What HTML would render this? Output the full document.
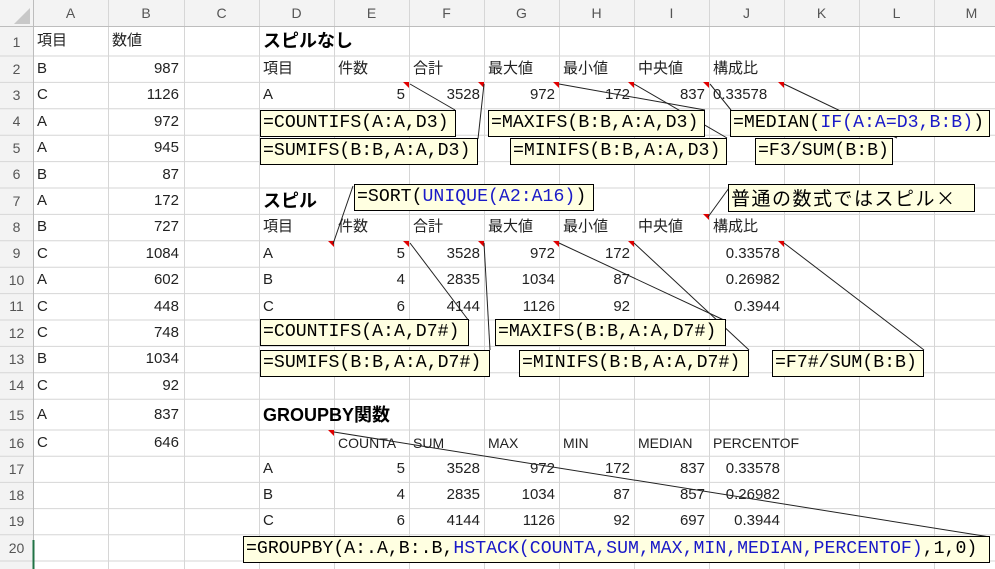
<!DOCTYPE html>
<html><head><meta charset="utf-8"><style>
*{margin:0;padding:0;box-sizing:border-box}
body{width:995px;height:569px;overflow:hidden;background:#fff;position:relative;font-family:"Liberation Sans","Noto Sans CJK JP",sans-serif;font-size:15px;color:#222}
.c{position:absolute;height:26px;line-height:26px;width:75px;padding:0 4px;white-space:nowrap}
.n{text-align:right}
.h{position:absolute;color:#555;font-size:14px;text-align:center}
.b{font-weight:bold;font-size:18px;color:#000}
.box{position:absolute;background:#ffffe1;border:1px solid #000;font-family:"Liberation Mono",monospace;font-size:18.2px;line-height:25px;padding:0 2px;white-space:nowrap;color:#000}
.bl{color:#1a1ac8}
</style></head><body>
<svg width="995" height="569" style="position:absolute;left:0;top:0">
<rect x="0" y="0" width="995" height="27" fill="#f3f3f3"/>
<rect x="0" y="0" width="33" height="569" fill="#f3f3f3"/>
<polygon points="14,24 30,24 30,8" fill="#c8c8c8"/>
<g stroke="#d6d6d6" stroke-width="1">
<line x1="108.5" y1="0" x2="108.5" y2="569"/><line x1="184.5" y1="0" x2="184.5" y2="569"/><line x1="259.5" y1="0" x2="259.5" y2="569"/><line x1="334.5" y1="0" x2="334.5" y2="569"/><line x1="409.5" y1="0" x2="409.5" y2="569"/><line x1="484.5" y1="0" x2="484.5" y2="569"/><line x1="559.5" y1="0" x2="559.5" y2="569"/><line x1="634.5" y1="0" x2="634.5" y2="569"/><line x1="709.5" y1="0" x2="709.5" y2="569"/><line x1="784.5" y1="0" x2="784.5" y2="569"/><line x1="859.5" y1="0" x2="859.5" y2="569"/><line x1="934.5" y1="0" x2="934.5" y2="569"/>
<line x1="0" y1="56" x2="995" y2="56"/><line x1="0" y1="82.4" x2="995" y2="82.4"/><line x1="0" y1="108.8" x2="995" y2="108.8"/><line x1="0" y1="135.2" x2="995" y2="135.2"/><line x1="0" y1="161.6" x2="995" y2="161.6"/><line x1="0" y1="188" x2="995" y2="188"/><line x1="0" y1="214.4" x2="995" y2="214.4"/><line x1="0" y1="240.8" x2="995" y2="240.8"/><line x1="0" y1="267.2" x2="995" y2="267.2"/><line x1="0" y1="293.6" x2="995" y2="293.6"/><line x1="0" y1="320" x2="995" y2="320"/><line x1="0" y1="346.4" x2="995" y2="346.4"/><line x1="0" y1="372.8" x2="995" y2="372.8"/><line x1="0" y1="399.2" x2="995" y2="399.2"/><line x1="0" y1="430" x2="995" y2="430"/><line x1="0" y1="456.2" x2="995" y2="456.2"/><line x1="0" y1="482.4" x2="995" y2="482.4"/><line x1="0" y1="508.6" x2="995" y2="508.6"/><line x1="0" y1="534.8" x2="995" y2="534.8"/><line x1="0" y1="561" x2="995" y2="561"/>
</g>
<line x1="0" y1="26.5" x2="995" y2="26.5" stroke="#bdbdbd"/>
<line x1="33.5" y1="0" x2="33.5" y2="569" stroke="#bdbdbd"/>
<line x1="33.5" y1="540" x2="33.5" y2="569" stroke="#217346" stroke-width="2"/>
<g fill="#e00000">
<polygon points="403,82 409,82 409,88"/><polygon points="478,82 484,82 484,88"/><polygon points="553,82 559,82 559,88"/><polygon points="628,82 634,82 634,88"/><polygon points="703,82 709,82 709,88"/><polygon points="778,82 784,82 784,88"/>
<polygon points="703,214 709,214 709,220"/>
<polygon points="328,241 334,241 334,247"/><polygon points="403,241 409,241 409,247"/><polygon points="478,241 484,241 484,247"/><polygon points="553,241 559,241 559,247"/><polygon points="628,241 634,241 634,247"/><polygon points="778,241 784,241 784,247"/>
<polygon points="328,430 334,430 334,436"/>
</g>
<g stroke="#222" stroke-width="1">
<line x1="455" y1="110" x2="410" y2="84"/><line x1="478" y1="139" x2="484" y2="84"/><line x1="705" y1="110" x2="559" y2="84"/><line x1="727" y1="138" x2="634" y2="84"/><line x1="731" y1="110" x2="710" y2="84"/><line x1="897" y1="138" x2="784" y2="84"/>
<line x1="353" y1="186" x2="333" y2="244"/><line x1="729" y1="188" x2="708" y2="217"/>
<line x1="469" y1="321" x2="410" y2="243"/><line x1="490" y1="350" x2="484" y2="243"/><line x1="726" y1="321" x2="559" y2="243"/><line x1="749" y1="350" x2="634" y2="243"/><line x1="924" y1="350" x2="784" y2="243"/>
<line x1="990" y1="537" x2="334" y2="432"/>
</g>
</svg>
<!-- column headers -->
<div class="h" style="left:33px;top:5px;width:75px">A</div><div class="h" style="left:108px;top:5px;width:76px">B</div><div class="h" style="left:184px;top:5px;width:75px">C</div><div class="h" style="left:259px;top:5px;width:75px">D</div><div class="h" style="left:334px;top:5px;width:75px">E</div><div class="h" style="left:409px;top:5px;width:75px">F</div><div class="h" style="left:484px;top:5px;width:75px">G</div><div class="h" style="left:559px;top:5px;width:75px">H</div><div class="h" style="left:634px;top:5px;width:75px">I</div><div class="h" style="left:709px;top:5px;width:75px">J</div><div class="h" style="left:784px;top:5px;width:75px">K</div><div class="h" style="left:859px;top:5px;width:75px">L</div><div class="h" style="left:934px;top:5px;width:75px">M</div>
<!-- row numbers -->
<div class="h" style="left:0;width:33px;top:34px">1</div><div class="h" style="left:0;width:33px;top:61px">2</div><div class="h" style="left:0;width:33px;top:87px">3</div><div class="h" style="left:0;width:33px;top:113px">4</div><div class="h" style="left:0;width:33px;top:140px">5</div><div class="h" style="left:0;width:33px;top:166px">6</div><div class="h" style="left:0;width:33px;top:193px">7</div><div class="h" style="left:0;width:33px;top:219px">8</div><div class="h" style="left:0;width:33px;top:245px">9</div><div class="h" style="left:0;width:33px;top:272px">10</div><div class="h" style="left:0;width:33px;top:298px">11</div><div class="h" style="left:0;width:33px;top:325px">12</div><div class="h" style="left:0;width:33px;top:351px">13</div><div class="h" style="left:0;width:33px;top:377px">14</div><div class="h" style="left:0;width:33px;top:407px">15</div><div class="h" style="left:0;width:33px;top:435px">16</div><div class="h" style="left:0;width:33px;top:461px">17</div><div class="h" style="left:0;width:33px;top:487px">18</div><div class="h" style="left:0;width:33px;top:513px">19</div><div class="h" style="left:0;width:33px;top:540px">20</div>
<!-- A/B -->
<div class="c" style="left:33px;top:28px">項目</div><div class="c" style="left:108px;top:28px">数値</div>
<div class="c" style="left:33px;top:56px">B</div><div class="c n" style="left:108px;top:56px">987</div>
<div class="c" style="left:33px;top:82px">C</div><div class="c n" style="left:108px;top:82px">1126</div>
<div class="c" style="left:33px;top:109px">A</div><div class="c n" style="left:108px;top:109px">972</div>
<div class="c" style="left:33px;top:135px">A</div><div class="c n" style="left:108px;top:135px">945</div>
<div class="c" style="left:33px;top:162px">B</div><div class="c n" style="left:108px;top:162px">87</div>
<div class="c" style="left:33px;top:188px">A</div><div class="c n" style="left:108px;top:188px">172</div>
<div class="c" style="left:33px;top:214px">B</div><div class="c n" style="left:108px;top:214px">727</div>
<div class="c" style="left:33px;top:241px">C</div><div class="c n" style="left:108px;top:241px">1084</div>
<div class="c" style="left:33px;top:267px">A</div><div class="c n" style="left:108px;top:267px">602</div>
<div class="c" style="left:33px;top:294px">C</div><div class="c n" style="left:108px;top:294px">448</div>
<div class="c" style="left:33px;top:320px">C</div><div class="c n" style="left:108px;top:320px">748</div>
<div class="c" style="left:33px;top:346px">B</div><div class="c n" style="left:108px;top:346px">1034</div>
<div class="c" style="left:33px;top:373px">C</div><div class="c n" style="left:108px;top:373px">92</div>
<div class="c" style="left:33px;top:402px">A</div><div class="c n" style="left:108px;top:402px">837</div>
<div class="c" style="left:33px;top:430px">C</div><div class="c n" style="left:108px;top:430px">646</div>
<!-- section 1 -->
<div class="c b" style="left:259px;top:28px;width:150px">スピルなし</div>
<div class="c" style="left:259px;top:56px">項目</div><div class="c" style="left:334px;top:56px">件数</div><div class="c" style="left:409px;top:56px">合計</div><div class="c" style="left:484px;top:56px">最大値</div><div class="c" style="left:559px;top:56px">最小値</div><div class="c" style="left:634px;top:56px">中央値</div><div class="c" style="left:709px;top:56px">構成比</div>
<div class="c" style="left:259px;top:82px">A</div><div class="c n" style="left:334px;top:82px">5</div><div class="c n" style="left:409px;top:82px">3528</div><div class="c n" style="left:484px;top:82px">972</div><div class="c n" style="left:559px;top:82px">172</div><div class="c n" style="left:634px;top:82px">837</div><div class="c" style="left:709px;top:82px">0.33578</div>
<!-- section 2 -->
<div class="c b" style="left:259px;top:188px">スピル</div>
<div class="c" style="left:259px;top:214px">項目</div><div class="c" style="left:334px;top:214px">件数</div><div class="c" style="left:409px;top:214px">合計</div><div class="c" style="left:484px;top:214px">最大値</div><div class="c" style="left:559px;top:214px">最小値</div><div class="c" style="left:634px;top:214px">中央値</div><div class="c" style="left:709px;top:214px">構成比</div>
<div class="c" style="left:259px;top:241px">A</div><div class="c n" style="left:334px;top:241px">5</div><div class="c n" style="left:409px;top:241px">3528</div><div class="c n" style="left:484px;top:241px">972</div><div class="c n" style="left:559px;top:241px">172</div><div class="c n" style="left:709px;top:241px">0.33578</div>
<div class="c" style="left:259px;top:267px">B</div><div class="c n" style="left:334px;top:267px">4</div><div class="c n" style="left:409px;top:267px">2835</div><div class="c n" style="left:484px;top:267px">1034</div><div class="c n" style="left:559px;top:267px">87</div><div class="c n" style="left:709px;top:267px">0.26982</div>
<div class="c" style="left:259px;top:294px">C</div><div class="c n" style="left:334px;top:294px">6</div><div class="c n" style="left:409px;top:294px">4144</div><div class="c n" style="left:484px;top:294px">1126</div><div class="c n" style="left:559px;top:294px">92</div><div class="c n" style="left:709px;top:294px">0.3944</div>
<!-- section 3 -->
<div class="c b" style="left:259px;top:402px;width:150px">GROUPBY関数</div>
<div class="c" style="left:334px;top:430px;font-size:14px">COUNTA</div><div class="c" style="left:409px;top:430px;font-size:14px">SUM</div><div class="c" style="left:484px;top:430px;font-size:14px">MAX</div><div class="c" style="left:559px;top:430px;font-size:14px">MIN</div><div class="c" style="left:634px;top:430px;font-size:14px">MEDIAN</div><div class="c" style="left:709px;top:430px;font-size:14px;width:100px">PERCENTOF</div>
<div class="c" style="left:259px;top:456px">A</div><div class="c n" style="left:334px;top:456px">5</div><div class="c n" style="left:409px;top:456px">3528</div><div class="c n" style="left:484px;top:456px">972</div><div class="c n" style="left:559px;top:456px">172</div><div class="c n" style="left:634px;top:456px">837</div><div class="c n" style="left:709px;top:456px">0.33578</div>
<div class="c" style="left:259px;top:482px">B</div><div class="c n" style="left:334px;top:482px">4</div><div class="c n" style="left:409px;top:482px">2835</div><div class="c n" style="left:484px;top:482px">1034</div><div class="c n" style="left:559px;top:482px">87</div><div class="c n" style="left:634px;top:482px">857</div><div class="c n" style="left:709px;top:482px">0.26982</div>
<div class="c" style="left:259px;top:508px">C</div><div class="c n" style="left:334px;top:508px">6</div><div class="c n" style="left:409px;top:508px">4144</div><div class="c n" style="left:484px;top:508px">1126</div><div class="c n" style="left:559px;top:508px">92</div><div class="c n" style="left:634px;top:508px">697</div><div class="c n" style="left:709px;top:508px">0.3944</div>
<!-- comment boxes -->
<div class="box" style="left:260px;top:110px;width:196px;height:27px">=COUNTIFS(A:A,D3)</div>
<div class="box" style="left:260px;top:138px;width:218px;height:27px">=SUMIFS(B:B,A:A,D3)</div>
<div class="box" style="left:488px;top:110px;width:217px;height:27px">=MAXIFS(B:B,A:A,D3)</div>
<div class="box" style="left:510px;top:138px;width:217px;height:27px">=MINIFS(B:B,A:A,D3)</div>
<div class="box" style="left:730px;top:110px;width:260px;height:27px">=MEDIAN(<span class="bl">IF(A:A=D3,B:B)</span>)</div>
<div class="box" style="left:755px;top:138px;width:138px;height:27px">=F3/SUM(B:B)</div>
<div class="box" style="left:354px;top:184px;width:240px;height:27px">=SORT(<span class="bl">UNIQUE(A2:A16)</span>)</div>
<div class="box" style="left:728px;top:184px;width:247px;height:28px;font-family:'Noto Sans CJK JP',sans-serif;font-size:19px;letter-spacing:1.5px;line-height:26px">普通の数式ではスピル×</div>
<div class="box" style="left:260px;top:319px;width:209px;height:27px">=COUNTIFS(A:A,D7#)</div>
<div class="box" style="left:260px;top:350px;width:230px;height:27px">=SUMIFS(B:B,A:A,D7#)</div>
<div class="box" style="left:495px;top:319px;width:231px;height:27px">=MAXIFS(B:B,A:A,D7#)</div>
<div class="box" style="left:519px;top:350px;width:230px;height:27px">=MINIFS(B:B,A:A,D7#)</div>
<div class="box" style="left:772px;top:350px;width:152px;height:27px">=F7#/SUM(B:B)</div>
<div class="box" style="left:243px;top:536px;width:747px;height:27px">=GROUPBY(A:.A,B:.B,<span class="bl">HSTACK(COUNTA,SUM,MAX,MIN,MEDIAN,PERCENTOF)</span>,1,0)</div>
</body></html>
